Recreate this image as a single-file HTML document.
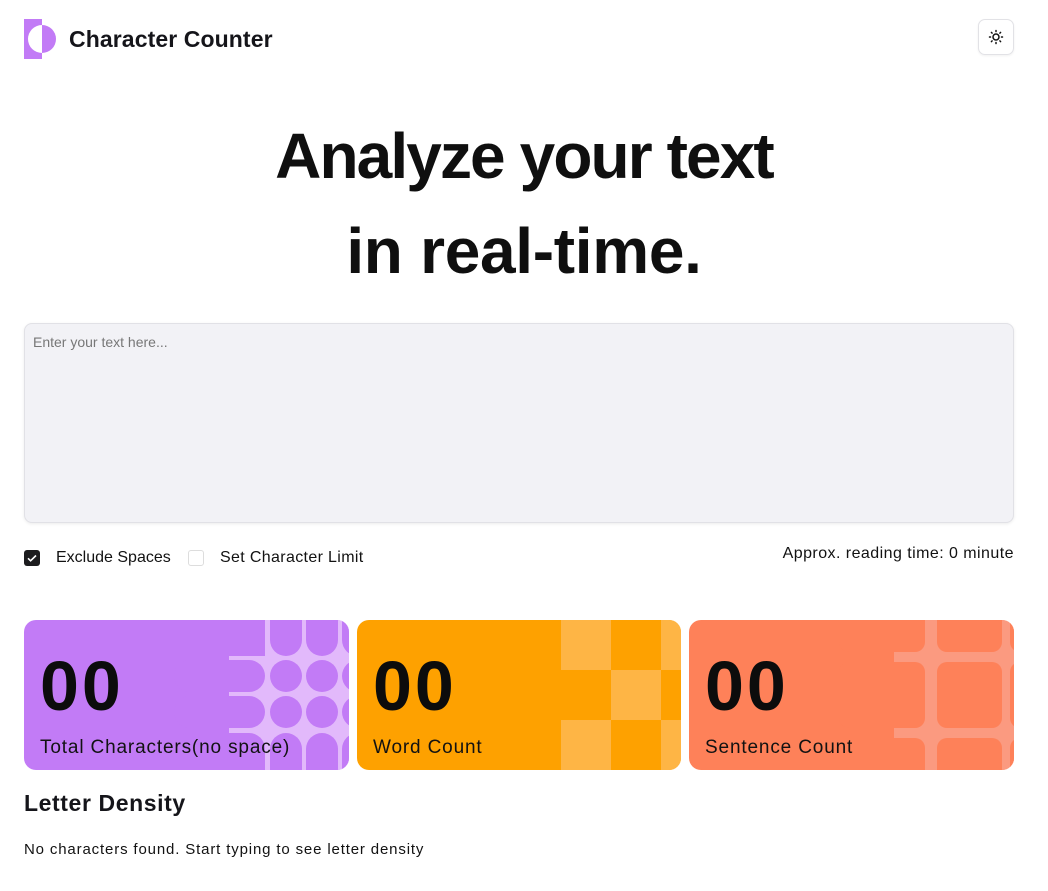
<!DOCTYPE html>
<html><head><meta charset="utf-8"><style>
*{box-sizing:border-box;margin:0;padding:0}
body{width:1048px;height:891px;background:#fff;font-family:"Liberation Sans",sans-serif;color:#121212;position:relative;overflow:hidden}
.abs{position:absolute}
.h1{position:absolute;left:0;width:1048px;text-align:center;font-weight:bold;font-size:64px;letter-spacing:-1.9px;color:#0f0f0f}
.card{position:absolute;top:620px;height:150px;border-radius:12px;overflow:hidden}
.num{position:absolute;left:16px;top:26px;font-size:70px;font-weight:bold;letter-spacing:3px;color:#0c0c0c}
.lbl{position:absolute;left:16px;top:117px;font-size:19px;letter-spacing:0.85px;color:#121212}
</style></head><body>
<svg class="abs" style="left:24px;top:19px" width="33" height="40" viewBox="0 0 33 40"><rect x="0" y="0" width="18" height="40" fill="#c27bf6"/><path d="M18 6 A14 14 0 0 1 18 34 Z" fill="#c27bf6"/><path d="M18 6 A14 14 0 0 0 18 34 Z" fill="#fff"/></svg>
<div class="abs" style="left:69px;top:26px;font-size:23px;font-weight:bold;letter-spacing:0.1px;color:#15151a">Character Counter</div>
<div class="abs" style="left:978px;top:19px;width:36px;height:36px;border:1px solid #e2e2e6;border-radius:7px;box-shadow:0 1px 2px rgba(0,0,0,.06)">
<svg width="34" height="34" viewBox="0 0 34 34" style="position:absolute;left:0;top:0"><circle cx="17" cy="17" r="3" fill="none" stroke="#111" stroke-width="1.5"/><g stroke="#111" stroke-width="1.5" stroke-linecap="round"><path d="M17 10.5v1M17 22.5v1M10.5 17h1M22.5 17h1M12.4 12.4l.7.7M20.9 20.9l.7.7M12.4 21.6l.7-.7M20.9 13.1l.7-.7"/></g></svg></div>
<div class="h1" style="top:119px">Analyze your text</div>
<div class="h1" style="top:214px;letter-spacing:-0.3px">in real-time.</div>
<div class="abs" style="left:24px;top:323px;width:990px;height:200px;background:#f2f2f6;border:1px solid #e1e1e6;border-radius:8px;box-shadow:0 1px 3px rgba(0,0,0,.08)"></div>
<div class="abs" style="left:33px;top:334px;font-size:14px;color:#777">Enter your text here...</div>
<div class="abs" style="left:24px;top:550px;width:16px;height:16px;background:#1c1c1e;border-radius:3px"><svg width="16" height="16"><path d="M4 8.3l2.6 2.5L12 5.5" fill="none" stroke="#fff" stroke-width="1.6"/></svg></div>
<div class="abs" style="left:56px;top:549px;font-size:16px">Exclude Spaces</div>
<div class="abs" style="left:188px;top:550px;width:16px;height:16px;border:1px solid #ddd;border-radius:3px"></div>
<div class="abs" style="left:220px;top:549px;font-size:16px;letter-spacing:0.35px">Set Character Limit</div>
<div class="abs" style="right:34px;top:545px;font-size:16px;letter-spacing:0.45px">Approx. reading time: 0 minute</div>

<div class="card" style="left:24px;width:325px;background:#c27bf6">
<svg class="abs" style="left:0;top:0" width="325" height="150">
<rect x="205" y="0" width="120" height="150" fill="#e2b9fb"/>
<g fill="#c27bf6">
<rect x="150" y="0" width="91" height="36" rx="0"/>
<rect x="150" y="40" width="91" height="32" rx="16"/>
<rect x="150" y="76" width="91" height="32" rx="16"/>
<rect x="150" y="113" width="91" height="60" rx="16"/>
<rect x="246" y="-30" width="32" height="66" rx="16"/>
<rect x="282" y="-30" width="32" height="66" rx="16"/>
<rect x="318" y="-30" width="32" height="66" rx="16"/>
<circle cx="262" cy="56" r="16"/><circle cx="298" cy="56" r="16"/><circle cx="334" cy="56" r="16"/>
<circle cx="262" cy="92" r="16"/><circle cx="298" cy="92" r="16"/><circle cx="334" cy="92" r="16"/>
<rect x="246" y="113" width="32" height="66" rx="16"/>
<rect x="282" y="113" width="32" height="66" rx="16"/>
<rect x="318" y="113" width="32" height="66" rx="16"/>
</g></svg>
<div class="num">00</div><div class="lbl">Total Characters(no space)</div></div>

<div class="card" style="left:357px;width:324px;background:#fea100">
<svg class="abs" style="left:0;top:0" width="324" height="150"><g fill="#feb545">
<rect x="204" y="0" width="50" height="50"/><rect x="304" y="0" width="50" height="50"/>
<rect x="254" y="50" width="50" height="50"/>
<rect x="204" y="100" width="50" height="50"/><rect x="304" y="100" width="50" height="50"/></g></svg>
<div class="num">00</div><div class="lbl">Word Count</div></div>

<div class="card" style="left:689px;width:325px;background:#fe8159">
<svg class="abs" style="left:0;top:0" width="325" height="150">
<rect x="205" y="0" width="120" height="150" fill="#fb9a80"/>
<g fill="#fe8159">
<rect x="150" y="-30" width="86" height="62" rx="10"/>
<rect x="150" y="42" width="86" height="66" rx="10"/>
<rect x="150" y="118" width="86" height="60" rx="10"/>
<rect x="248" y="-30" width="65" height="62" rx="10"/>
<rect x="248" y="42" width="65" height="66" rx="10"/>
<rect x="248" y="118" width="65" height="60" rx="10"/>
<rect x="321" y="-30" width="60" height="62" rx="10"/>
<rect x="321" y="42" width="60" height="66" rx="10"/>
<rect x="321" y="118" width="60" height="60" rx="10"/>
</g></svg>
<div class="num">00</div><div class="lbl">Sentence Count</div></div>

<div class="abs" style="left:24px;top:790px;font-size:23px;font-weight:bold;letter-spacing:0.6px;color:#15151a">Letter Density</div>
<div class="abs" style="left:24px;top:841px;font-size:15px;letter-spacing:0.85px">No characters found. Start typing to see letter density</div>
</body></html>
